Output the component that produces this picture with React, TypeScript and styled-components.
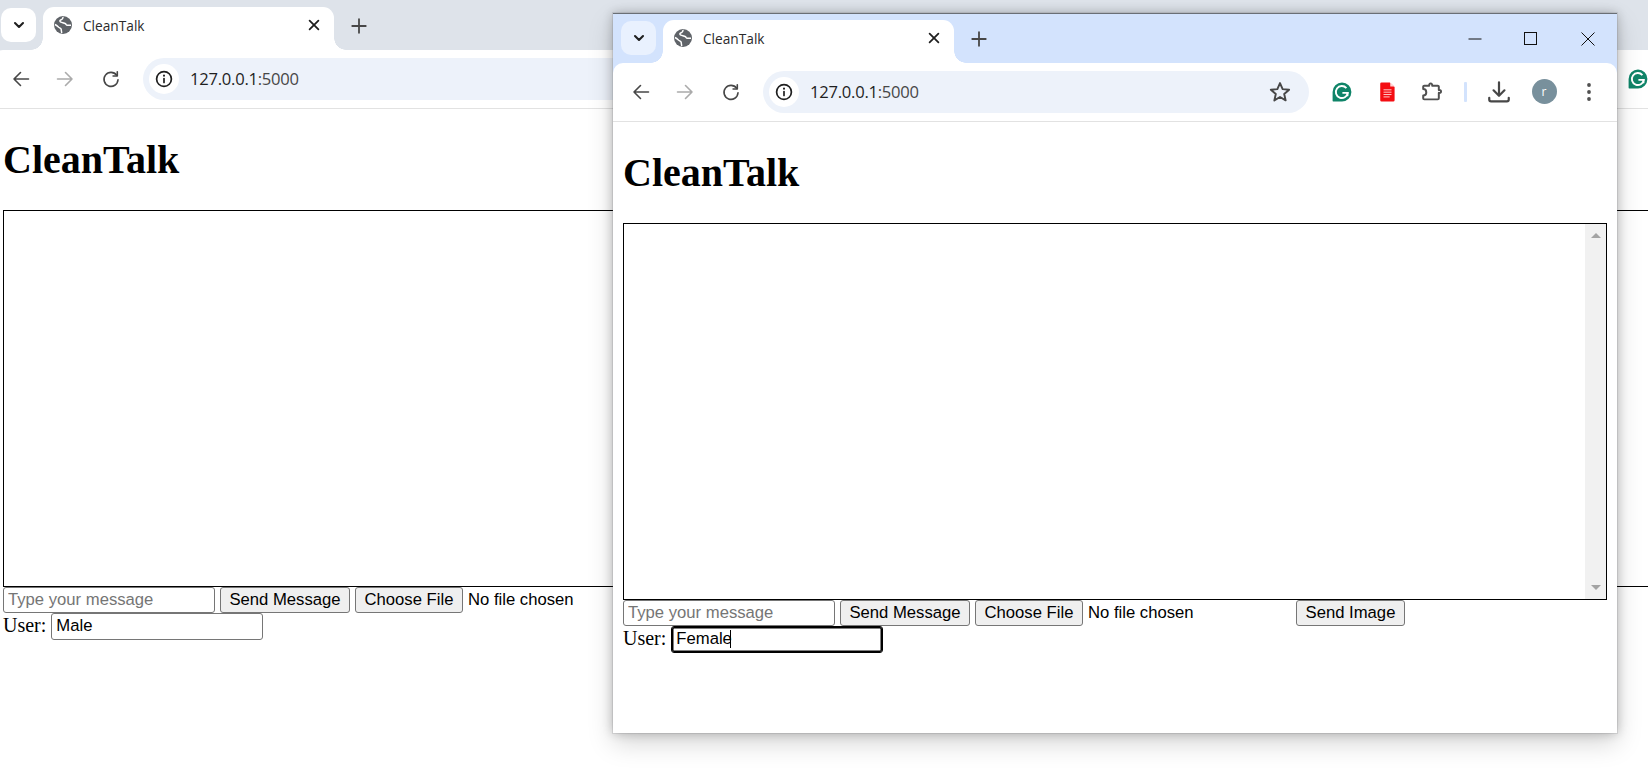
import React from "react";
import styled, { createGlobalStyle } from "styled-components";

const Global = createGlobalStyle`
  html, body { margin: 0; padding: 0; background: #fff; }
  body { overflow: hidden; }
`;

const Desktop = styled.div`
  position: relative;
  width: 1648px;
  height: 773px;
  overflow: hidden;
  background: #fff;
`;

const Window = styled.div<{ $front?: boolean }>`
  position: absolute;
  display: flex;
  flex-direction: column;
  box-sizing: border-box;
  background: ${(p) => (p.$front ? "#d3e3fd" : "#dee3ea")};
  left: ${(p) => (p.$front ? "613px" : "-7px")};
  top: ${(p) => (p.$front ? "13px" : "0")};
  width: ${(p) => (p.$front ? "1004px" : "1920px")};
  height: ${(p) => (p.$front ? "720px" : "773px")};
  ${(p) =>
    p.$front &&
    `box-shadow: 0 0 10px rgba(0,0,0,.24), 0 10px 24px rgba(0,0,0,.17);
     outline: 1px solid rgba(90,95,100,.14);`}
`;

const TabStrip = styled.div<{ $front?: boolean }>`
  display: flex;
  align-items: flex-start;
  height: 50px;
  flex: none;
  box-sizing: border-box;
  padding: 7px 0 0 8px;
  ${(p) => p.$front && "box-shadow: inset 0 1px 0 #6a6f75;"}
`;

const TabSearch = styled.div<{ $front?: boolean }>`
  width: 35px;
  height: 34px;
  margin-top: 1px;
  flex: none;
  display: flex;
  align-items: center;
  justify-content: center;
  border-radius: 10px;
  background: ${(p) => (p.$front ? "#e9f1fe" : "#ffffff")};
`;

const Tab = styled.div`
  position: relative;
  display: flex;
  align-items: center;
  box-sizing: border-box;
  width: 291px;
  height: 43px;
  margin-left: 7px;
  padding: 0 12px 7px 11px;
  flex: none;
  background: #fff;
  border-radius: 11px 11px 0 0;

  &::before,
  &::after {
    content: "";
    position: absolute;
    bottom: 0;
    width: 12px;
    height: 12px;
  }
  &::before {
    left: -12px;
    background: radial-gradient(circle at 0 0, transparent 11.5px, #fff 12px);
  }
  &::after {
    right: -12px;
    background: radial-gradient(circle at 100% 0, transparent 11.5px, #fff 12px);
  }
`;

const TabTitle = styled.span`
  flex: 1;
  margin-left: 11px;
  font: 400 13.7px "Open Sans", "Noto Sans", sans-serif;
  color: #2a2a2a;
`;

const NewTab = styled.div`
  width: 28px;
  height: 28px;
  margin: 5px 0 0 11px;
  display: flex;
  align-items: center;
  justify-content: center;
  flex: none;
`;

const WindowControls = styled.div`
  display: flex;
  margin-left: auto;
  margin-top: -6px;
  padding-right: 1px;
  height: 50px;
  align-items: center;
`;

const WindowControl = styled.div`
  width: 56.5px;
  display: flex;
  align-items: center;
  justify-content: center;
`;

const Toolbar = styled.div`
  position: relative;
  display: flex;
  align-items: center;
  box-sizing: border-box;
  height: 59px;
  flex: none;
  padding: 0 5.5px 1px 6px;
  background: #fff;
  border-bottom: 1px solid #e2e2e2;
  border-radius: 10px 10px 0 0;
`;

const NavButton = styled.div<{ $gap?: number }>`
  width: 44px;
  height: 40px;
  margin-left: ${(p) => p.$gap ?? 0}px;
  flex: none;
  display: flex;
  align-items: center;
  justify-content: center;
`;

const Omnibox = styled.div`
  flex: 1;
  height: 42px;
  margin: 0 10.5px 0 10px;
  display: flex;
  align-items: center;
  padding: 0 6px;
  box-sizing: border-box;
  border-radius: 21px;
  background: #edf2fa;
`;

const InfoChip = styled.div`
  width: 30px;
  height: 30px;
  flex: none;
  border-radius: 50%;
  background: #fff;
  display: flex;
  align-items: center;
  justify-content: center;
`;

const Url = styled.span`
  margin-left: 11px;
  font: 400 16.6px "Open Sans", "Noto Sans", sans-serif;
  letter-spacing: -0.25px;
  color: #1f1f1f;
`;

const UrlPort = styled.span`
  color: #474747;
`;

const StarSlot = styled.div`
  width: 30px;
  margin: 0 8px 0 auto;
  display: flex;
  justify-content: center;
`;

const ActionButton = styled.div`
  width: 45px;
  height: 40px;
  flex: none;
  display: flex;
  align-items: center;
  justify-content: center;
`;

const Divider = styled.div`
  width: 22px;
  height: 20px;
  flex: none;
  display: flex;
  justify-content: center;

  &::before {
    content: "";
    width: 2.5px;
    height: 20px;
    border-radius: 1px;
    background: #d3e3fd;
  }
`;

const Avatar = styled.div`
  width: 25px;
  height: 25px;
  border-radius: 50%;
  background: #78909c;
  color: #fff;
  display: flex;
  align-items: center;
  justify-content: center;
  font: 400 12px "Open Sans", sans-serif;
`;

const Page = styled.main`
  flex: 1;
  padding: 0 10px;
  background: #fff;
  color: #000;
  font: 400 20px "Liberation Serif", "Times New Roman", serif;
`;

const Heading = styled.h1`
  margin: 28px 0 27px;
  font: 700 40px/46px "Liberation Serif", "Times New Roman", serif;
`;

const ChatBox = styled.div`
  height: 377px;
  box-sizing: border-box;
  border: 1px solid #000;
  display: flex;
  justify-content: flex-end;
`;

const ScrollTrack = styled.div`
  width: 21px;
  background: #f1f1f1;
  display: flex;
  flex-direction: column;
  justify-content: space-between;
  align-items: center;
  padding: 9px 0;
`;

const ScrollArrow = styled.div<{ $down?: boolean }>`
  width: 0;
  height: 0;
  border-left: 5px solid transparent;
  border-right: 5px solid transparent;
  ${(p) =>
    p.$down ? "border-top: 5px solid #a3a3a3;" : "border-bottom: 5px solid #a3a3a3;"}
`;

const FormRow = styled.div`
  display: flex;
  align-items: center;
  gap: 5px;
  height: 26px;
`;

const UserLabel = styled.span`
  margin-bottom: 2px;
`;

const FieldWrap = styled.div`
  position: relative;
  flex: none;
`;

const TextField = styled.input<{ $focused?: boolean }>`
  display: block;
  box-sizing: border-box;
  width: 212px;
  height: 26px;
  padding: 0 4px;
  border: 1px solid ${(p) => (p.$focused ? "#000" : "#767676")};
  border-radius: 3px;
  outline: none;
  background: #fff;
  color: #000;
  font: 400 16.67px "Liberation Sans", Arial, sans-serif;
  ${(p) => p.$focused && "box-shadow: inset 0 0 0 1.5px #000;"}

  &::placeholder {
    color: #757575;
    opacity: 1;
  }
`;

const UserField = styled(TextField)`
  height: 27px;
`;

const Caret = styled.span`
  position: absolute;
  left: 59px;
  top: 4px;
  width: 1px;
  height: 18px;
  background: #000;
`;

const FormButton = styled.button<{ $width: number }>`
  box-sizing: border-box;
  width: ${(p) => p.$width}px;
  height: 25.5px;
  padding: 0;
  flex: none;
  background: #efefef;
  border: 1px solid #767676;
  border-radius: 3px;
  color: #000;
  font: 400 16.67px "Liberation Sans", Arial, sans-serif;
`;

const FileName = styled.span`
  width: 203px;
  flex: none;
  white-space: nowrap;
  font: 400 16.67px "Liberation Sans", Arial, sans-serif;
`;

const Stroke = ({ size, children, color = "#474747", width = 1.6 }: { size: number; children: React.ReactNode; color?: string; width?: number }) => (
  <svg width={size} height={size} viewBox="0 0 20 20" fill="none" stroke={color} strokeWidth={width} strokeLinecap="round" strokeLinejoin="round">
    {children}
  </svg>
);

const Globe = () => (
  <svg width="18" height="18" viewBox="0 0 18 18">
    <circle cx="9" cy="9" r="9" fill="#5f6368" />
    <path d="M8.800 0.800c.6 1.200-.6 2.600-2.200 3.200-1 .4-1 1.600.2 2.100 1.600.7 3.400.6 4.600 1.600.7.6.8 1.600 2 1.600h3.600" fill="none" stroke="#fff" strokeWidth="1.500" />
    <path d="M0.900 8.500c1.600.7 2.600 1.600 3.800 2.700.8.7 2 .8 2.400 1.800.3.9.2 2.500.7 4" fill="none" stroke="#fff" strokeWidth="1.500" />
  </svg>
);

const GrammarlyIcon = () => (
  <svg width="20" height="20" viewBox="0 0 20 20">
    <path d="M10 0.600a9.400 9.400 0 1 1 0 18.800H1.200a.6.6 0 0 1-.6-.6V10A9.400 9.400 0 0 1 10 .6z" fill="#0f8468" />
    <path d="M14.400 6.100A6 6 0 1 0 15.800 10.900H10.400" fill="none" stroke="#fff" strokeWidth="1.900" />
    <path d="M15.600 11v3.200" stroke="#fff" strokeWidth="1.600" />
  </svg>
);

const DocIcon = () => (
  <svg width="15" height="20" viewBox="0 0 16 22">
    <path d="M1.500 0.500H10.500L15.800 5.500V20a1.500 1.500 0 0 1-1.500 1.500H1.500A1.500 1.500 0 0 1 0 20V2A1.500 1.500 0 0 1 1.500 .5z" fill="#f40d12" />
    <path d="M11 0.600V5h4.600z" fill="#ffd6d6" />
    <path d="M3.600 8.600h8.800M3.600 11.200h8.800M3.600 13.800h8.800M3.600 16.400h6.800" stroke="#ffc9c9" strokeWidth="1.100" />
  </svg>
);

const PuzzleIcon = () => (
  <svg width="22" height="22" viewBox="0 0 20 20" fill="none" stroke="#505050" strokeWidth="1.800" strokeLinejoin="round">
    <path d="M3 4.300H7.400C7.300 2.900 8 2.200 8.800 2.200s1.500.7 1.400 2.100h5a1 1 0 0 1 1 1V8.200c1.300-.3 2 .4 2 1.300s-.7 1.600-2 1.300v4.900a1 1 0 0 1-1 1H3a1 1 0 0 1-1-1v-2.500c1.700 0 2.800-1.100 2.800-2.800S3.700 7.300 2 7.300V5.300a1 1 0 0 1 1-1z" />
  </svg>
);

const Browser = ({ front, user }: { front?: boolean; user: string }) => (
  <Window $front={front}>
    <TabStrip $front={front}>
      <TabSearch $front={front}>
        <Stroke size={16} color="#1f1f1f" width={2.600}><path d="M5 7.500l5 5 5-5" /></Stroke>
      </TabSearch>
      <Tab>
        <Globe />
        <TabTitle>CleanTalk</TabTitle>
        <Stroke size={16} color="#1f1f1f" width={2.200}><path d="M4.500 4.500l11 11M15.500 4.500l-11 11" /></Stroke>
      </Tab>
      <NewTab>
        <Stroke size={18} color="#474747" width={2}><path d="M10 2.500v15M2.500 10h15" /></Stroke>
      </NewTab>
      {front && (
        <WindowControls>
          <WindowControl>
            <svg width="14" height="14" viewBox="0 0 14 14"><path d="M0.500 7h13" stroke="#111" fill="none" /></svg>
          </WindowControl>
          <WindowControl>
            <svg width="14" height="14" viewBox="0 0 14 14"><rect x="0.500" y="0.500" width="12" height="12" stroke="#111" fill="none" /></svg>
          </WindowControl>
          <WindowControl>
            <svg width="14" height="14" viewBox="0 0 14 14"><path d="M.500.500l13 13M13.500.500l-13 13" stroke="#111" fill="none" /></svg>
          </WindowControl>
        </WindowControls>
      )}
    </TabStrip>
    <Toolbar>
      <NavButton>
        <Stroke size={20}><path d="M17.500 10H3M9.500 3.500L3 10l6.500 6.500" /></Stroke>
      </NavButton>
      <NavButton>
        <Stroke size={20} color="#ababab"><path d="M2.500 10H17M10.500 3.500L17 10l-6.500 6.500" /></Stroke>
      </NavButton>
      <NavButton $gap={2}>
        <Stroke size={20}><path d="M15.700 6.300A7 7 0 1 0 17 10.800" /><path d="M16.300 2.800v4.200h-4.200" /></Stroke>
      </NavButton>
      <Omnibox>
        <InfoChip>
          <Stroke size={20} color="#1f1f1f" width={1.700}>
            <circle cx="10" cy="10" r="7.400" />
            <path d="M10 9.500v4" />
            <path d="M10 6.500v.3" strokeWidth="2" />
          </Stroke>
        </InfoChip>
        <Url>127.0.0.1<UrlPort>:5000</UrlPort></Url>
        <StarSlot>
          <Stroke size={24} width={1.600}><path d="M10 2.600l2.200 5 5.400.5-4.100 3.600 1.200 5.300L10 14.200 5.300 17l1.200-5.300L2.400 8.100l5.400-.5z" /></Stroke>
        </StarSlot>
      </Omnibox>
      <ActionButton><GrammarlyIcon /></ActionButton>
      <ActionButton><DocIcon /></ActionButton>
      <ActionButton><PuzzleIcon /></ActionButton>
      <Divider />
      <ActionButton>
        <Stroke size={26} color="#474747" width={1.700}><path d="M10 2.500v10M5.800 8.700l4.200 4.200 4.200-4.200" /><path d="M2.500 14.500v1.300a1.400 1.400 0 0 0 1.400 1.400h12.200a1.400 1.400 0 0 0 1.400-1.400v-1.300" /></Stroke>
      </ActionButton>
      <ActionButton><Avatar>{front && "r"}</Avatar></ActionButton>
      <ActionButton>
        <svg width="6" height="20" viewBox="0 0 6 20" fill="#505050"><circle cx="3" cy="3" r="1.900" /><circle cx="3" cy="10" r="1.900" /><circle cx="3" cy="17" r="1.900" /></svg>
      </ActionButton>
    </Toolbar>
    <Page>
      <Heading>CleanTalk</Heading>
      <ChatBox>
        <ScrollTrack>
          <ScrollArrow />
          <ScrollArrow $down />
        </ScrollTrack>
      </ChatBox>
      <FormRow>
        <FieldWrap><TextField placeholder="Type your message" readOnly /></FieldWrap>
        <FormButton $width={130}>Send Message</FormButton>
        <FormButton $width={108}>Choose File</FormButton>
        <FileName>No file chosen</FileName>
        {front && <FormButton $width={109}>Send Image</FormButton>}
      </FormRow>
      <FormRow>
        <UserLabel>User:</UserLabel>
        <FieldWrap>
          <UserField value={user} readOnly $focused={front} />
          {front && <Caret />}
        </FieldWrap>
      </FormRow>
    </Page>
  </Window>
);

export default function App() {
  return (
    <Desktop>
      <Global />
      <Browser user="Male" />
      <Browser front user="Female" />
    </Desktop>
  );
}
